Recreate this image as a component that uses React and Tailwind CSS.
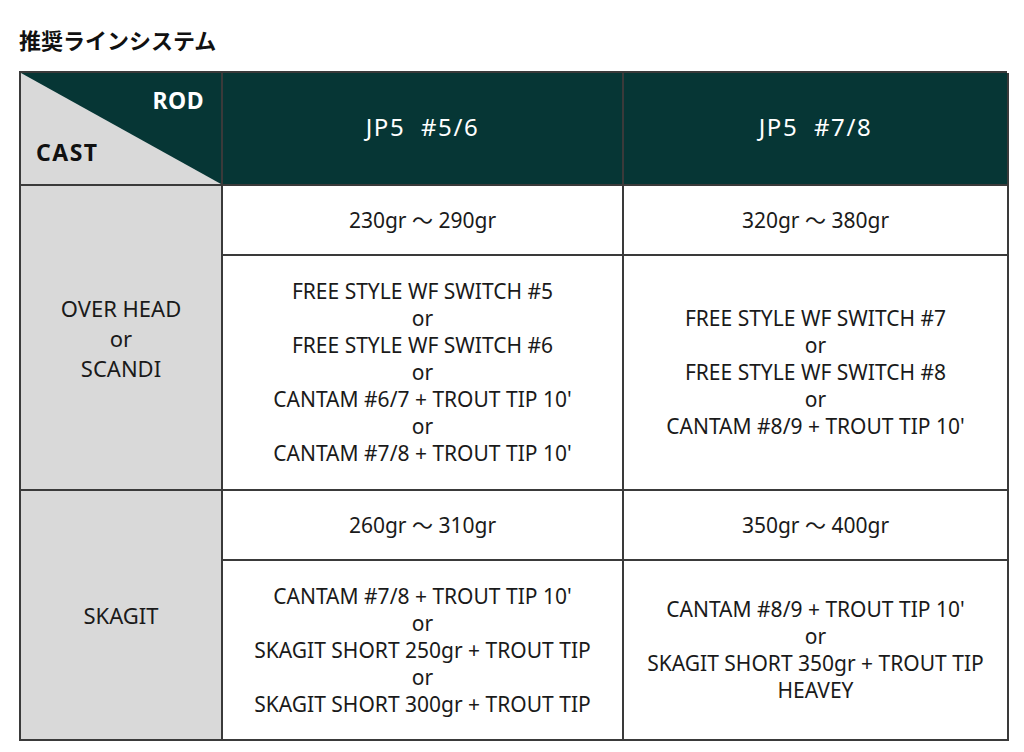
import React from "react";

const font = { fontFamily: '"Noto Sans", "Noto Sans CJK JP", sans-serif' };

function Lines({ lines, big }) {
  return (
    <div
      className={
        big
          ? "flex flex-col items-center text-center text-[22px] leading-[30px] text-[#1a1a1a]"
          : "flex flex-col items-center text-center text-[21px] leading-[27px] text-[#1a1a1a]"
      }
    >
      {lines.map((l, i) => (
        <div key={i}>{l}</div>
      ))}
    </div>
  );
}

export default function App() {
  return (
    <div className="w-[1024px] h-[752px] bg-white pt-[24px] pl-[19px]" style={font}>
      <h1
        className="text-[22px] font-bold leading-[30px] text-[#111] mb-[17px]"
        style={{ fontFamily: '"Noto Sans CJK JP", sans-serif' }}
      >
        推奨ラインシステム
      </h1>
      <div className="grid grid-cols-[202px_401px_385px] grid-rows-[113px_70px_235px_70px_180px] border-l-2 border-t-2 border-[#3a3a3a] w-[988px]">
        {/* corner */}
        <div className="relative border-r-2 border-b-2 border-[#3a3a3a] bg-[#d9d9d9] overflow-hidden">
          <svg className="absolute inset-0 w-full h-full" viewBox="0 0 100 100" preserveAspectRatio="none">
            <polygon points="0,0 100,0 100,100" fill="#063635" />
          </svg>
          <div className="absolute right-[17px] top-[12px] text-white font-bold text-[23px] leading-[30px] tracking-[0.5px]">ROD</div>
          <div className="absolute left-[15px] top-[64px] text-[#111] font-bold text-[23px] leading-[30px] tracking-[1.5px]">CAST</div>
        </div>
        <div className="flex items-center justify-center bg-[#063635] border-r-2 border-b-2 border-[#3a3a3a] text-white text-[24px] tracking-[1.6px] pb-[4px]">
          JP5&nbsp;&nbsp;#5/6
        </div>
        <div className="flex items-center justify-center bg-[#063635] border-r-2 border-b-2 border-[#3a3a3a] text-white text-[24px] tracking-[1.6px] pb-[4px]">
          JP5&nbsp;&nbsp;#7/8
        </div>

        {/* OVER HEAD */}
        <div className="row-span-2 flex items-center justify-center bg-[#d9d9d9] border-r-2 border-b-2 border-[#3a3a3a]">
          <Lines big lines={["OVER HEAD", "or", "SCANDI"]} />
        </div>
        <div className="flex items-center justify-center border-r-2 border-b-2 border-[#3a3a3a]">
          <Lines lines={["230gr 〜 290gr"]} />
        </div>
        <div className="flex items-center justify-center border-r-2 border-b-2 border-[#3a3a3a]">
          <Lines lines={["320gr 〜 380gr"]} />
        </div>
        <div className="flex items-center justify-center border-r-2 border-b-2 border-[#3a3a3a]">
          <Lines
            lines={[
              "FREE STYLE WF SWITCH #5",
              "or",
              "FREE STYLE WF SWITCH #6",
              "or",
              "CANTAM #6/7 + TROUT TIP 10'",
              "or",
              "CANTAM #7/8 + TROUT TIP 10'",
            ]}
          />
        </div>
        <div className="flex items-center justify-center border-r-2 border-b-2 border-[#3a3a3a]">
          <Lines
            lines={[
              "FREE STYLE WF SWITCH #7",
              "or",
              "FREE STYLE WF SWITCH #8",
              "or",
              "CANTAM #8/9 + TROUT TIP 10'",
            ]}
          />
        </div>

        {/* SKAGIT */}
        <div className="row-span-2 flex items-center justify-center bg-[#d9d9d9] border-r-2 border-b-2 border-[#3a3a3a]">
          <Lines big lines={["SKAGIT"]} />
        </div>
        <div className="flex items-center justify-center border-r-2 border-b-2 border-[#3a3a3a]">
          <Lines lines={["260gr 〜 310gr"]} />
        </div>
        <div className="flex items-center justify-center border-r-2 border-b-2 border-[#3a3a3a]">
          <Lines lines={["350gr 〜 400gr"]} />
        </div>
        <div className="flex items-center justify-center border-r-2 border-b-2 border-[#3a3a3a]">
          <Lines
            lines={[
              "CANTAM #7/8 + TROUT TIP 10'",
              "or",
              "SKAGIT SHORT 250gr + TROUT TIP",
              "or",
              "SKAGIT SHORT 300gr + TROUT TIP",
            ]}
          />
        </div>
        <div className="flex items-center justify-center border-r-2 border-b-2 border-[#3a3a3a]">
          <Lines
            lines={[
              "CANTAM #8/9 + TROUT TIP 10'",
              "or",
              "SKAGIT SHORT 350gr + TROUT TIP",
              "HEAVEY",
            ]}
          />
        </div>
      </div>
    </div>
  );
}
